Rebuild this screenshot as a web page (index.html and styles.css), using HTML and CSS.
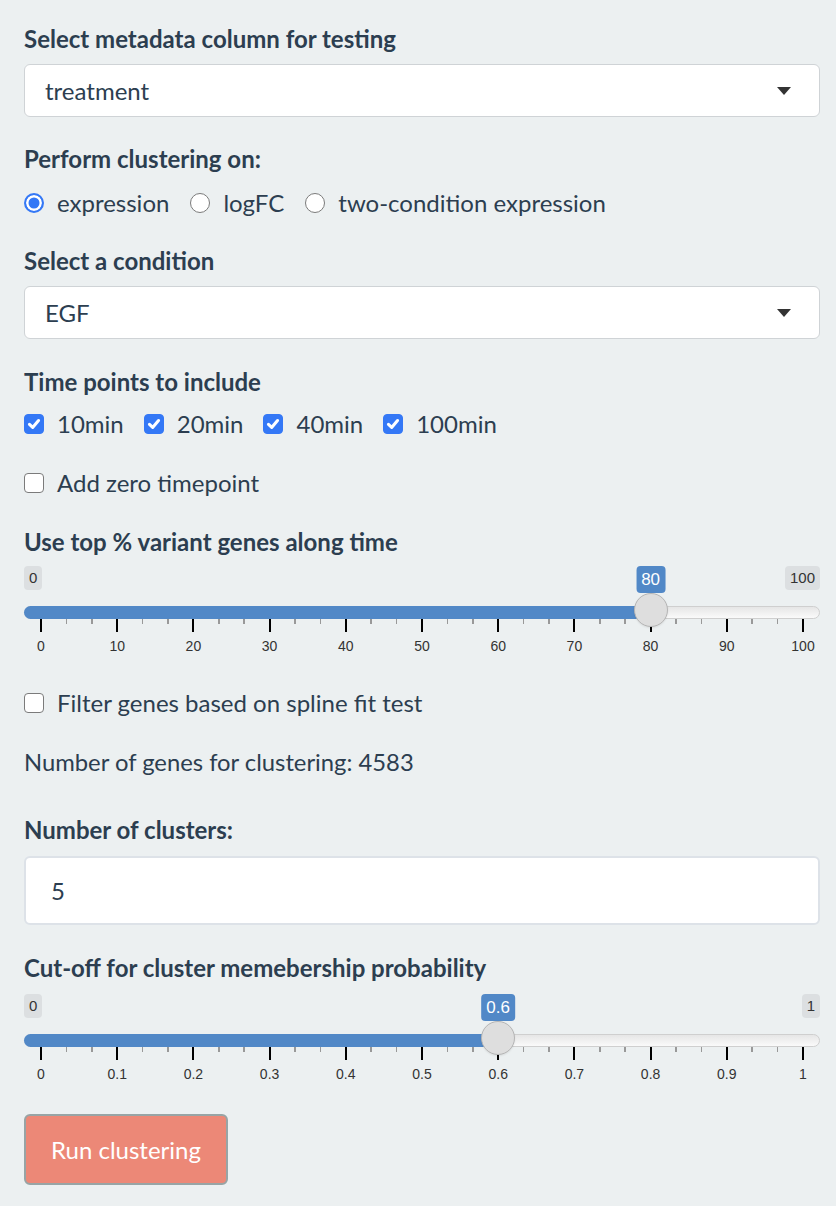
FILE: index.html
```html
<!DOCTYPE html>
<html>
<head>
<meta charset="utf-8">
<link rel="stylesheet" href="styles.css">
</head>
<body>
<div class="panel">
  <div class="label">Select metadata column for testing</div>
  <div class="select g-sel"><span>treatment</span><span class="caret"></span></div>

  <div class="label g-l2">Perform clustering on:</div>
  <div class="row g-opt">
    <span class="opt"><span class="radio on"></span>expression</span>
    <span class="opt"><span class="radio"></span>logFC</span>
    <span class="opt"><span class="radio"></span>two-condition expression</span>
  </div>

  <div class="label g-l3">Select a condition</div>
  <div class="select g-sel"><span>EGF</span><span class="caret"></span></div>

  <div class="label g-l4">Time points to include</div>
  <div class="row g-opt2">
    <span class="opt"><span class="check on"><svg viewBox="0 0 12 12"><path d="M2.6 6.3 L5 8.6 L9.4 3.4" /></svg></span>10min</span>
    <span class="opt"><span class="check on"><svg viewBox="0 0 12 12"><path d="M2.6 6.3 L5 8.6 L9.4 3.4" /></svg></span>20min</span>
    <span class="opt"><span class="check on"><svg viewBox="0 0 12 12"><path d="M2.6 6.3 L5 8.6 L9.4 3.4" /></svg></span>40min</span>
    <span class="opt"><span class="check on"><svg viewBox="0 0 12 12"><path d="M2.6 6.3 L5 8.6 L9.4 3.4" /></svg></span>100min</span>
  </div>

  <div class="row g-zero"><span class="opt"><span class="check"></span>Add zero timepoint</span></div>

  <div class="label g-l5">Use top % variant genes along time</div>
  <div class="slider g-s1" id="s1" data-min="0" data-max="100" data-val="80" data-step="10" data-dec="0">
    <div class="badges"><span class="badge-min">0</span><span class="badge-max">100</span></div>
    <div class="track"></div>
    <div class="grid"></div>
  </div>

  <div class="row g-filter"><span class="opt"><span class="check"></span>Filter genes based on spline fit test</span></div>

  <div class="text g-num">Number of genes for clustering: 4583</div>

  <div class="label g-l6">Number of clusters:</div>
  <div class="numinput g-in">5</div>

  <div class="label g-l7">Cut-off for cluster memebership probability</div>
  <div class="slider g-s2" id="s2" data-min="0" data-max="1" data-val="0.6" data-step="0.1" data-dec="1">
    <div class="badges"><span class="badge-min">0</span><span class="badge-max">1</span></div>
    <div class="track"></div>
    <div class="grid"></div>
  </div>

  <button class="btn">Run clustering</button>
</div>
<script src="script.js"></script>
</body>
</html>
```

FILE: styles.css
```css
* { box-sizing: border-box; }
html, body {
  margin: 0;
  background: #ecf0f1;
}
body {
  font-family: Lato, "Open Sans", sans-serif;
  color: #2c3e50;
  font-size: 24px;
}
.panel {
  padding: 24px 16px 20px 24px;
  display: flex;
  flex-direction: column;
  align-items: stretch;
}
.label {
  font-weight: 700;
  line-height: 30px;
  height: 30px;
  white-space: nowrap;
}
.text, .row {
  line-height: 30px;
  height: 30px;
  white-space: nowrap;
}
.text { font-size: 23.8px; }
.select {
  height: 53px;
  background: #fff;
  border: 1px solid #cfd3d6;
  border-radius: 6px;
  display: flex;
  align-items: center;
  justify-content: space-between;
  padding: 0 28px 0 20px;
}
.caret {
  width: 0;
  height: 0;
  border-left: 7.5px solid transparent;
  border-right: 7.5px solid transparent;
  border-top: 8px solid #333;
}
.g-sel { margin-top: 10px; }
.g-l2 { margin-top: 27px; }
.g-opt { margin-top: 14px; }
.g-l3 { margin-top: 28px; }
.g-l4 { margin-top: 28px; }
.g-opt2 { margin-top: 12px; }
.g-zero { margin-top: 29px; }
.g-l5 { margin-top: 29px; }
.g-s1 { margin-top: 9px; }
.g-filter { margin-top: 32px; }
.g-num { margin-top: 29px; }
.g-l6 { margin-top: 38px; }
.g-in { margin-top: 11px; }
.g-l7 { margin-top: 28px; }
.g-s2 { margin-top: 11px; }

.row {
  display: flex;
  align-items: center;
}
.opt {
  display: inline-flex;
  align-items: center;
  margin-right: 21px;
}
.g-opt2 .opt { margin-right: 20px; }
.radio {
  width: 20px;
  height: 20px;
  border-radius: 50%;
  background: #fff;
  border: 1.5px solid #7b7b7b;
  margin-right: 13px;
  flex: none;
}
.radio.on {
  border: 2px solid #3478f6;
  background: #3478f6;
  box-shadow: inset 0 0 0 2.5px #fff;
}
.check {
  width: 20px;
  height: 20px;
  border-radius: 4px;
  background: #fff;
  border: 1.5px solid #7b7b7b;
  margin-right: 13px;
  flex: none;
  display: inline-flex;
  align-items: center;
  justify-content: center;
}
.check.on {
  background: #3478f6;
  border-color: #3478f6;
}
.check svg {
  width: 16px;
  height: 16px;
}
.check svg path {
  fill: none;
  stroke: #fff;
  stroke-width: 2.3;
  stroke-linecap: round;
  stroke-linejoin: round;
}

.slider {
  position: relative;
  height: 90px;
  font-family: "Liberation Sans", Arial, sans-serif;
}
.badges {
  display: flex;
  justify-content: space-between;
  align-items: flex-start;
  height: 40px;
}
.badge-min, .badge-max {
  background: #dcdfe1;
  color: #333;
  font-size: 15px;
  line-height: 24px;
  height: 24px;
  padding: 0 5px;
  border-radius: 4px;
}
.badge-val {
  position: absolute;
  top: 0;
  transform: translateX(-50%);
  background: #5188c7;
  color: #fff;
  font-size: 17px;
  line-height: 27px;
  height: 27px;
  padding: 0 5px;
  border-radius: 4px;
}
.track {
  position: relative;
  height: 13px;
  border-radius: 7px;
  border: 1px solid #cfcfcf;
  background: linear-gradient(#e6e6e6, #fafafa);
}
.fill {
  position: absolute;
  left: -1px;
  top: -1px;
  bottom: -1px;
  background: #5188c7;
  border-radius: 7px 0 0 7px;
}
.handle {
  position: absolute;
  width: 34px;
  height: 34px;
  margin-left: -17px;
  border-radius: 50%;
  background: #dedede;
  border: 1px solid #b5b5b5;
  box-shadow: 0 1px 2px rgba(0,0,0,0.08);
}
.grid {
  position: relative;
  margin: 0 17px;
  height: 37px;
}
.tick {
  position: absolute;
  top: 0;
  width: 2px;
  margin-left: -1px;
  height: 13px;
  background: #000;
}
.tick.minor {
  width: 1.5px;
  margin-left: -0.75px;
  height: 5px;
  background: #999;
}
.tlabel {
  position: absolute;
  top: 19px;
  transform: translateX(-50%);
  font-size: 14px;
  line-height: 16px;
  color: #333;
  white-space: nowrap;
}

.numinput {
  height: 69px;
  background: #fff;
  border: 2px solid #dde2e8;
  border-radius: 6px;
  display: flex;
  align-items: center;
  padding-left: 25px;
}
.btn {
  align-self: flex-start;
  margin-top: 30px;
  width: 204px;
  height: 71px;
  background: #ec8877;
  border: 2px solid #98a4a5;
  border-radius: 6px;
  color: #fff;
  font-family: Lato, "Open Sans", sans-serif;
  font-size: 24px;
  padding: 0;
}
```

FILE: script.js
```js
document.querySelectorAll('.slider').forEach(function (s) {
  var min = parseFloat(s.dataset.min), max = parseFloat(s.dataset.max);
  var val = parseFloat(s.dataset.val), step = parseFloat(s.dataset.step);
  var dec = parseInt(s.dataset.dec, 10);
  var pct = (val - min) / (max - min);
  var grid = s.querySelector('.grid');
  var n = Math.round((max - min) / step);
  for (var i = 0; i <= n; i++) {
    var p = i / n * 100;
    var t = document.createElement('span');
    t.className = 'tick';
    t.style.left = p + '%';
    grid.appendChild(t);
    var l = document.createElement('span');
    l.className = 'tlabel';
    l.style.left = p + '%';
    var v = min + i * step;
    l.textContent = (i === 0 || i === n) ? String(Math.round(v)) : v.toFixed(dec);
    grid.appendChild(l);
    if (i < n) {
      for (var k = 1; k < 3; k++) {
        var m = document.createElement('span');
        m.className = 'tick minor';
        m.style.left = (p + k * 100 / n / 3) + '%';
        grid.appendChild(m);
      }
    }
  }
  var w = s.clientWidth;
  var x = 17 + pct * (w - 34);
  var fill = document.createElement('div');
  fill.className = 'fill';
  fill.style.width = (x + 1) + 'px';
  s.querySelector('.track').appendChild(fill);
  var h = document.createElement('div');
  h.className = 'handle';
  h.style.left = x + 'px';
  h.style.top = '27px';
  s.appendChild(h);
  var b = document.createElement('span');
  b.className = 'badge-val';
  b.style.left = x + 'px';
  b.textContent = String(val);
  s.appendChild(b);
});
```
